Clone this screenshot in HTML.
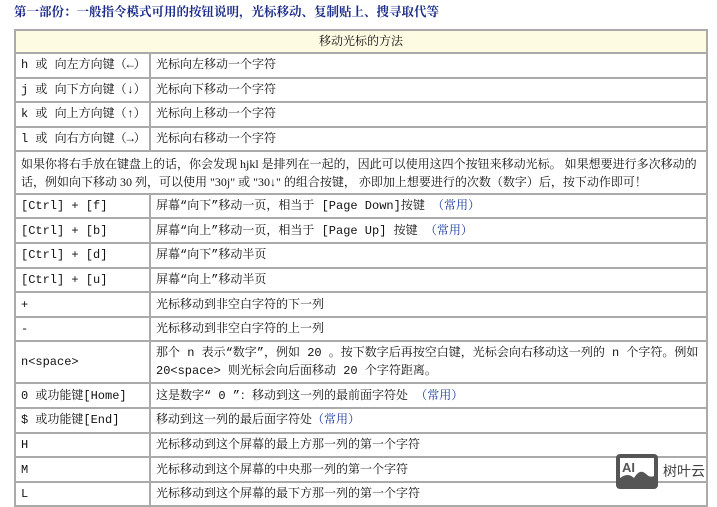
<!DOCTYPE html><html><head><meta charset="utf-8"><style>
body{margin:0;background:#fff;width:717px;height:500px;overflow:hidden;position:relative;font-family:"Liberation Mono","Noto Serif CJK SC",serif;font-size:12px;color:#111}
.t{position:absolute;left:14px;top:2px;font-weight:bold;color:#1a2a8a;font-size:12.5px;font-family:"Liberation Serif","Noto Serif CJK SC",serif}
table{position:absolute;left:14px;top:29px;width:694px;border-collapse:collapse}
td{border:2px solid #aaa;padding:0 5px;height:22.6px;line-height:18px}
td.a{width:123px}
.h{background:#fdfbe2;text-align:center;height:21px!important}
.c{color:#1a3a9a}
.s{font-family:"Liberation Serif","Noto Serif CJK SC",serif}
.logo{position:absolute;left:616px;top:454px;width:42px;height:35px;background:#555;border-radius:4px}
.lt{position:absolute;left:663px;top:461px;font-family:"Liberation Sans","Noto Sans CJK SC",sans-serif;font-size:14px;color:#444}
</style></head><body>
<div class="t">第一部份：一般指令模式可用的按钮说明，光标移动、复制贴上、搜寻取代等</div>
<table>
<tr><td colspan="2" class="h">移动光标的方法</td></tr>
<tr><td class="a">h 或 向左方向键（←）</td><td>光标向左移动一个字符</td></tr>
<tr><td class="a">j 或 向下方向键（↓）</td><td>光标向下移动一个字符</td></tr>
<tr><td class="a">k 或 向上方向键（↑）</td><td>光标向上移动一个字符</td></tr>
<tr><td class="a">l 或 向右方向键（→）</td><td>光标向右移动一个字符</td></tr>
<tr><td colspan="2" class="s" style="height:40.5px">如果你将右手放在键盘上的话，你会发现 hjkl 是排列在一起的，因此可以使用这四个按钮来移动光标。 如果想要进行多次移动的话，例如向下移动 30 列，可以使用 "30j" 或 "30↓" 的组合按键， 亦即加上想要进行的次数（数字）后，按下动作即可！</td></tr>
<tr><td class="a">[Ctrl] + [f]</td><td>屏幕“向下”移动一页，相当于 [Page Down]按键 <span class="c">（常用）</span></td></tr>
<tr><td class="a">[Ctrl] + [b]</td><td>屏幕“向上”移动一页，相当于 [Page Up] 按键 <span class="c">（常用）</span></td></tr>
<tr><td class="a">[Ctrl] + [d]</td><td>屏幕“向下”移动半页</td></tr>
<tr><td class="a">[Ctrl] + [u]</td><td>屏幕“向上”移动半页</td></tr>
<tr><td class="a">+</td><td>光标移动到非空白字符的下一列</td></tr>
<tr><td class="a">-</td><td>光标移动到非空白字符的上一列</td></tr>
<tr><td class="a" style="height:40px">n&lt;space&gt;</td><td>那个 n 表示“数字”，例如 20 。按下数字后再按空白键，光标会向右移动这一列的 n 个字符。例如 20&lt;space&gt; 则光标会向后面移动 20 个字符距离。</td></tr>
<tr><td class="a">0 或功能键[Home]</td><td>这是数字“ 0 ”：移动到这一列的最前面字符处 <span class="c">（常用）</span></td></tr>
<tr><td class="a">$ 或功能键[End]</td><td>移动到这一列的最后面字符处<span class="c">（常用）</span></td></tr>
<tr><td class="a">H</td><td>光标移动到这个屏幕的最上方那一列的第一个字符</td></tr>
<tr><td class="a">M</td><td>光标移动到这个屏幕的中央那一列的第一个字符</td></tr>
<tr><td class="a">L</td><td>光标移动到这个屏幕的最下方那一列的第一个字符</td></tr>
</table>
<div class="logo"><svg width="42" height="35" viewBox="0 0 42 35"><rect x="4" y="4" width="34" height="27" fill="#fff"/><text x="6" y="18" font-family="Liberation Sans" font-weight="bold" font-size="13" fill="#555">AI</text><path d="M4 31 L4 24 Q12 18 18 24 Q24 14 30 20 Q34 24 38 22 L38 31Z" fill="#555"/></svg></div>
<div class="lt">树叶云</div>
</body></html>
